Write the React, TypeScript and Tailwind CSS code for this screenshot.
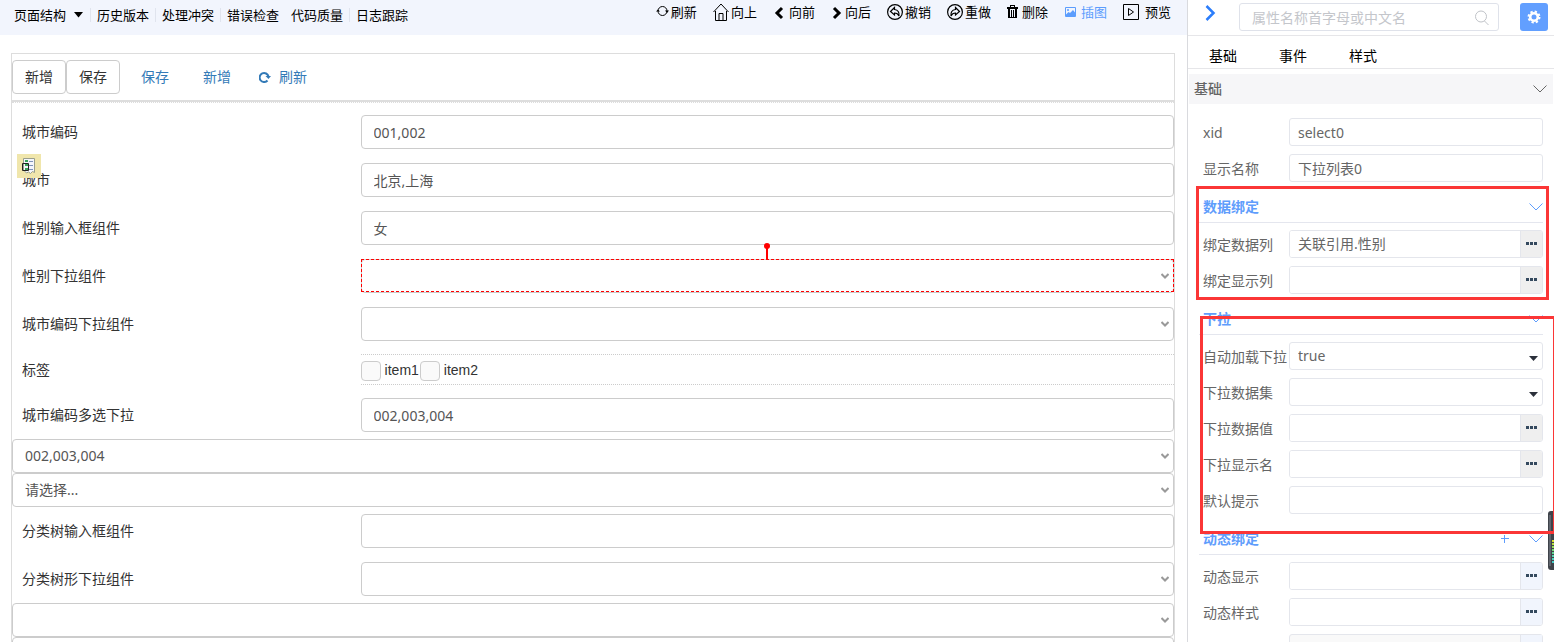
import { ReactNode } from 'react';

type Control = 'text' | 'select' | 'more' | 'dynamic';

interface Property {
  id: string;
  label: string;
  control: Control;
  value?: string;
}

const MENU_ITEMS = [
  { label: '历史版本', divided: true },
  { label: '处理冲突', divided: true },
  { label: '错误检查', divided: true },
  { label: '代码质量', divided: false },
  { label: '日志跟踪', divided: true }
];

const BASIC_PROPS: Property[] = [
  { id: 'xid', label: 'xid', control: 'text', value: 'select0' },
  { id: 'display-name', label: '显示名称', control: 'text', value: '下拉列表0' }
];

const BINDING_PROPS: Property[] = [
  { id: 'bind-ref', label: '绑定数据列', control: 'more', value: '关联引用.性别' },
  { id: 'bind-label', label: '绑定显示列', control: 'more' }
];

const DROPDOWN_PROPS: Property[] = [
  { id: 'auto-load', label: '自动加载下拉', control: 'select', value: 'true' },
  { id: 'option-data', label: '下拉数据集', control: 'select' },
  { id: 'option-value', label: '下拉数据值', control: 'more' },
  { id: 'option-label', label: '下拉显示名', control: 'more' },
  { id: 'option-hint', label: '默认提示', control: 'text' }
];

const DYNAMIC_PROPS: Property[] = [
  { id: 'dynamic-visible', label: '动态显示', control: 'dynamic' },
  { id: 'dynamic-style', label: '动态样式', control: 'dynamic' }
];

const RefreshIcon = () => (
  <svg className="h-4 w-[15px]" viewBox="0 0 15 16" fill="none" stroke="currentColor">
    <circle cx="6.500" cy="7" r="4.500" />
    <path d="M0 7.500h4L2 5.500zM9 6.500h4l-2 2.500z" fill="currentColor" stroke="none" />
  </svg>
);

const HomeIcon = () => (
  <svg className="h-5 w-[18px]" viewBox="0 0 18 20" fill="none" stroke="currentColor">
    <path d="M.5 10 8 2l7.500 8M2.500 9v9.500h11V9M6 18.500v-7h4v7" />
  </svg>
);

const BackIcon = () => (
  <svg className="h-4 w-4" viewBox="0 0 16 16" fill="none" stroke="currentColor" strokeWidth="3">
    <path d="M9 4 4 9l5 5" />
  </svg>
);

const ForwardIcon = () => (
  <svg className="h-4 w-3.5" viewBox="0 0 14 16" fill="none" stroke="currentColor" strokeWidth="3">
    <path d="m3 4 5 5-5 5" />
  </svg>
);

const UndoIcon = () => (
  <svg className="h-[18px] w-[18px]" viewBox="0 0 18 18" fill="none" stroke="currentColor" strokeWidth="1.200">
    <circle cx="8" cy="9" r="7.400" />
    <path d="M7.500 4.500 3.500 8.500l4 3.500v-2c2.500 0 3.500.5 4.500 3 .5-4-1-6-4.500-6.500z" />
  </svg>
);

const RedoIcon = () => (
  <svg className="h-[18px] w-[18px]" viewBox="0 0 18 18" fill="none" stroke="currentColor" strokeWidth="1.200">
    <circle cx="8" cy="9" r="7.400" />
    <path d="m8.500 4.500 4 4-4 3.500v-2c-2.500 0-3.500.5-4.500 3-.5-4 1-6 4.500-6.500z" />
  </svg>
);

const TrashIcon = () => (
  <svg className="h-4 w-[15px]" viewBox="0 0 15 16" fill="currentColor" shapeRendering="crispEdges">
    <path d="M0 3h11v2H0zM3 1h5v1H3zM3 1h1v2H3zM7 1h1v2H7z" />
    <path d="M1 5h2v9H1zM4 6h1v7H4zM6 6h1v7H6zM8 5h2v9H8zM2 13h7v1H2z" />
  </svg>
);

const ImageIcon = () => (
  <svg className="h-4 w-[17px]" viewBox="0 0 17 16">
    <path d="M1.500 3.500h10v9h-10z" fill="none" stroke="currentColor" />
    <path d="M2 10.500 4.500 8 6 9l3-3 2 2.500V12H2z" fill="currentColor" />
    <circle cx="4" cy="6" r="1" fill="currentColor" />
  </svg>
);

const PreviewIcon = () => (
  <svg className="h-[18px] w-[22px]" viewBox="0 0 22 18" fill="none" stroke="currentColor">
    <path d="M.5 1.500h15v15H.5zM5.500 5.500v7l5-3.500z" />
  </svg>
);

const ThinChevron = () => (
  <svg className="h-2 w-3.5" viewBox="0 0 14 8" fill="none" stroke="currentColor">
    <path d="m.5.5 6.500 6.500 6.500-6.500" />
  </svg>
);

const TOOLS: { label: string; icon: ReactNode }[] = [
  { label: '刷新', icon: <RefreshIcon /> },
  { label: '向上', icon: <HomeIcon /> },
  { label: '向前', icon: <BackIcon /> },
  { label: '向后', icon: <ForwardIcon /> },
  { label: '撤销', icon: <UndoIcon /> },
  { label: '重做', icon: <RedoIcon /> },
  { label: '删除', icon: <TrashIcon /> },
  { label: '插图', icon: <ImageIcon /> },
  { label: '预览', icon: <PreviewIcon /> }
];

const TopBar = () => (
  <header className="flex h-[35px] items-start justify-between bg-[#f2f5fd] pr-4 pl-2 text-[13px] leading-5 whitespace-nowrap text-black">
    <nav className="flex items-center pt-[5px]">
      <button className="flex items-center gap-2 px-1.5">
        页面结构
        <svg className="h-1.5 w-2.5" viewBox="0 0 10 6">
          <path d="M0 0h9L4.500 5.500z" />
        </svg>
      </button>
      {MENU_ITEMS.map(({ label, divided }) => (
        <div key={label} className="flex items-center">
          {divided && <span className="h-3.5 w-px bg-[#e0e4ee]" />}
          <button className="px-1.5">{label}</button>
        </div>
      ))}
    </nav>
    <div className="flex gap-4 pt-0.5">
      {TOOLS.map(({ label, icon }) => (
        <button
          key={label}
          className={
            label === '插图'
              ? 'flex h-5 items-center text-[#5c9dfd]'
              : 'flex h-5 items-center'
          }
        >
          {icon}
          {label}
        </button>
      ))}
    </div>
  </header>
);

const TextField = ({ id, value }: { id: string; value?: string }) => (
  <input
    id={id}
    type="text"
    defaultValue={value}
    className="block h-[34px] w-full rounded border border-[#ccc] bg-white px-3 text-[#555]"
  />
);

const SelectField = ({
  id,
  value,
  label
}: {
  id: string;
  value?: string;
  label?: string;
}) => (
  <div className="relative">
    <select
      id={id}
      aria-label={label}
      className="block h-[34px] w-full appearance-none rounded border border-[#ccc] bg-white px-3 text-[#555]"
    >
      <option>{value}</option>
    </select>
    <svg
      className="pointer-events-none absolute top-3.5 right-[5px] h-2 w-2"
      viewBox="0 0 8 8"
      fill="none"
      stroke="#999"
      strokeWidth="2"
    >
      <path d="m.5 1 3.500 3.500L7.500 1" />
    </svg>
  </div>
);

const FormRow = ({
  id,
  label,
  children
}: {
  id: string;
  label: string;
  children: ReactNode;
}) => (
  <div className="flex items-center py-[7px]">
    <label htmlFor={id} className="w-[30%] pl-2.5">
      {label}
    </label>
    <div className="w-[70%]">{children}</div>
  </div>
);

/** Yellow marker for the non-visual data component dropped on the page. */
const DataMarker = () => (
  <div className="absolute -top-0.5 left-[5px] bg-[#f0e6ac]">
    <svg className="h-6 w-6" viewBox="0 0 24 24" fill="none">
      <path d="M6.500 4.500h11v14l-2-1-2 2-2-1.500-2 1-3-3z" fill="#f4f6fb" stroke="#9a9f8c" />
      <path d="M12 7.500h4M12 11.500h4M12 15.500h4" stroke="#7f93b8" />
      <path d="M8 6h3v2H8zM8 10h3v2H8zM8 14h3v2H8z" fill="#3aa35a" />
      <path d="M5.500 9.500h6v7h-6z" stroke="#222" />
    </svg>
  </div>
);

const SelectionFrame = () => (
  <div className="pointer-events-none absolute inset-x-0 top-0 bottom-px border border-dashed border-[#f00]">
    <svg className="absolute -top-[17px] left-1/2 h-4 w-1.5 -translate-x-1/2" viewBox="0 0 6 16">
      <circle cx="3" cy="3" r="3" fill="#f00" />
      <path d="M2 4h2v12H2z" fill="#f00" />
    </svg>
  </div>
);

const Canvas = () => (
  <main className="mt-[18px] mr-3 ml-[11px] border border-[#ddd] text-sm text-[#333]">
    <div className="flex border-b-2 border-[#ddd] py-1.5 leading-5">
      <button className="rounded border border-[#ccc] px-3 py-1.5">新增</button>
      <button className="rounded border border-[#ccc] px-3 py-1.5">保存</button>
      <button className="ml-2 px-[13px] py-[7px] text-[#337ab7]">保存</button>
      <button className="ml-2 px-[13px] py-[7px] text-[#337ab7]">新增</button>
      <button className="ml-0.5 flex items-center gap-2 px-[13px] py-[7px] text-[#337ab7]">
        <svg className="h-3 w-3" viewBox="0 0 12 12" fill="none" stroke="currentColor" strokeWidth="2">
          <path d="M8.500 9.500A4.500 4.500 0 1 1 9.500 5.500" />
          <path d="M6.500 5h5.500L9.500 8z" fill="currentColor" stroke="none" />
        </svg>
        刷新
      </button>
    </div>
    <form className="border-t border-dotted border-[#ddd] pt-[5px]">
      <FormRow id="city-code" label="城市编码">
        <TextField id="city-code" value="001,002" />
      </FormRow>
      <div className="relative">
        <FormRow id="city" label="城市">
          <TextField id="city" value="北京,上海" />
        </FormRow>
        <DataMarker />
      </div>
      <FormRow id="gender" label="性别输入框组件">
        <TextField id="gender" value="女" />
      </FormRow>
      <FormRow id="gender-select" label="性别下拉组件">
        <div className="relative">
          <SelectField id="gender-select" />
          <SelectionFrame />
        </div>
      </FormRow>
      <FormRow id="city-select" label="城市编码下拉组件">
        <SelectField id="city-select" />
      </FormRow>
      <div className="flex items-center py-1.5">
        <span className="w-[30%] pl-2.5">标签</span>
        <div className="flex h-[31px] w-[70%] items-center gap-px border-y border-dotted border-[#ccc] font-['Liberation_Sans',sans-serif]">
          {['item1', 'item2'].map((item) => (
            <label key={item} className="flex items-center gap-1">
              <input
                type="checkbox"
                className="mt-0.5 h-5 w-5 appearance-none rounded border border-[#ccc] bg-[#fafafa]"
              />
              {item}
            </label>
          ))}
        </div>
      </div>
      <FormRow id="city-multi" label="城市编码多选下拉">
        <TextField id="city-multi" value="002,003,004" />
      </FormRow>
      <SelectField id="multi-select" label="多选下拉" value="002,003,004" />
      <SelectField id="single-select" label="单选下拉" value="请选择..." />
      <FormRow id="tree-input" label="分类树输入框组件">
        <TextField id="tree-input" />
      </FormRow>
      <FormRow id="tree-select" label="分类树形下拉组件">
        <SelectField id="tree-select" />
      </FormRow>
      <SelectField id="extra-select" label="下拉" />
      <SelectField id="extra-select-2" label="下拉" />
    </form>
  </main>
);

const Dots = () => (
  <svg className="h-[3px] w-[11px]" viewBox="0 0 11 3" fill="#34495e">
    <path d="M0 0h3v3H0zM4 0h3v3H4zM8 0h3v3H8z" />
  </svg>
);

const PropertyRow = ({ id, label, control, value }: Property) => {
  let field: ReactNode;

  if (control === 'select') {
    field = (
      <div className="relative flex-1">
        <select
          id={id}
          className="block h-7 w-full appearance-none rounded-[3px] border border-[#e4e6ec] bg-white px-2"
        >
          <option>{value}</option>
        </select>
        <svg
          className="pointer-events-none absolute top-3.5 right-[5px] h-[5px] w-[9px]"
          viewBox="0 0 9 5"
          fill="#2b303b"
        >
          <path d="M0 0h9L4.500 5z" />
        </svg>
      </div>
    );
  } else if (control === 'text') {
    field = (
      <input
        id={id}
        type="text"
        defaultValue={value}
        className="h-7 min-w-0 flex-1 rounded-[3px] border border-[#e4e6ec] bg-white px-2"
      />
    );
  } else {
    field = (
      <div className="flex h-7 min-w-0 flex-1 overflow-hidden rounded-[3px] border border-[#e4e6ec]">
        <input
          id={id}
          type="text"
          defaultValue={value}
          className="min-w-0 flex-1 bg-white px-2"
        />
        <button
          aria-label={`${label} 编辑`}
          className={
            control === 'dynamic'
              ? 'flex w-[22px] items-center justify-center border-l border-[#e4e6ec] bg-[#f1f5fd] pb-px'
              : 'flex w-[22px] items-center justify-center border-l border-[#e4e6ec] bg-[#efefef] pb-px'
          }
        >
          <Dots />
        </button>
      </div>
    );
  }

  return (
    <div className="flex items-center pl-[15px]">
      <label htmlFor={id} className="w-[86px] shrink-0 pt-0.5 whitespace-nowrap">
        {label}
      </label>
      {field}
    </div>
  );
};

const PropertyGroup = ({
  title,
  items,
  addable,
  children
}: {
  title: string;
  items: Property[];
  addable?: boolean;
  children?: ReactNode;
}) => (
  <section className="relative pr-[11px]">
    <h3 className="ml-[11px] flex h-[41px] items-center border-b border-[#e4e6ee] pt-2.5 pl-1 font-bold text-[#5f9dfc]">
      <span className="flex-1">{title}</span>
      {addable && (
        <button aria-label="添加" className="mr-5">
          <svg className="h-2 w-2" viewBox="0 0 8 8" stroke="currentColor">
            <path d="M0 3.500h8M3.500 0v8" />
          </svg>
        </button>
      )}
      <button aria-label="折叠">
        <ThinChevron />
      </button>
    </h3>
    <div className="flex flex-col gap-2 pt-[7px]">
      {items.map((item) => (
        <PropertyRow key={item.id} {...item} />
      ))}
    </div>
    {children}
  </section>
);

const METER_COLORS = ['#d8e02f', '#b5e03c', '#94dd55', '#76da74', '#5fd593', '#50d3ac', '#48d0bd', '#43cec8'];

const LevelMeter = () => (
  <svg className="absolute top-[511px] right-0 h-[59px] w-1.5" viewBox="0 0 6 59">
    <path d="M6 0H3Q0 0 0 3v53q0 3 3 3h3z" fill="#3f434a" />
    <path d="M1 4h2v51H1z" fill="#5f646d" />
    {METER_COLORS.map((color, i) => (
      <rect key={color} x="4" y={29 + i * 3} width="2" height="2" fill={color} />
    ))}
  </svg>
);

const PropertyPanel = () => (
  <aside className="relative w-[367px] shrink-0 overflow-hidden border-l border-[#d9dade] bg-white text-sm text-[#666]">
    <div className="flex h-9 items-start border-b border-[#e6e6e9] pt-[3px] pr-1.5 pl-[17px]">
      <button aria-label="收起面板" className="text-[#2b7dfb]">
        <svg className="h-5 w-3" viewBox="0 0 12 20" fill="none" stroke="currentColor" strokeWidth="2.500">
          <path d="m1.500 3 7 7-7 7" />
        </svg>
      </button>
      <div className="relative mr-[21px] ml-[22px] flex-1">
        <input
          type="search"
          aria-label="搜索属性"
          placeholder="属性名称首字母或中文名"
          className="block h-7 w-full rounded-[3px] border border-[#dfe2ea] px-3 placeholder:text-[#c4c6cb]"
        />
        <svg
          className="pointer-events-none absolute top-[7px] right-2.5 h-4 w-3.5"
          viewBox="0 0 14 16"
          fill="none"
          stroke="#c0c3c8"
        >
          <circle cx="6" cy="6.500" r="5.500" />
          <path d="m9.500 11 4 4" />
        </svg>
      </div>
      <button
        aria-label="设置"
        className="flex h-7 w-7 items-center justify-center rounded-[3px] bg-[#629fff] text-white"
      >
        <svg className="h-3.5 w-3.5" viewBox="0 0 14 14" fill="none" stroke="currentColor">
          <circle cx="7" cy="7" r="3.800" strokeWidth="2.600" />
          <circle cx="7" cy="7" r="5.500" strokeWidth="2" strokeDasharray="2.300 2.019" />
        </svg>
      </button>
    </div>
    <div className="flex h-[33px] items-end gap-[42px] border-b border-[#e6e6e9] pb-0.5 pl-[21px] text-black">
      <button>基础</button>
      <button>事件</button>
      <button>样式</button>
    </div>
    <h2 className="mx-px mt-[5px] flex h-[30px] items-center justify-between bg-[#f6f6f8] pr-1.5 pl-[5px] font-medium">
      基础
      <button aria-label="折叠">
        <ThinChevron />
      </button>
    </h2>
    <div className="flex flex-col gap-2 pt-3.5 pr-[11px]">
      {BASIC_PROPS.map((item) => (
        <PropertyRow key={item.id} {...item} />
      ))}
    </div>
    <LevelMeter />
    <PropertyGroup title="数据绑定" items={BINDING_PROPS}>
      <div className="pointer-events-none absolute top-1 right-[5px] -bottom-1.5 left-2 z-10 border-3 border-[#fb3636]" />
    </PropertyGroup>
    <PropertyGroup title="下拉" items={DROPDOWN_PROPS}>
      <div className="pointer-events-none absolute top-[22px] -right-0.5 -bottom-5 left-3 z-10 border-3 border-[#fb3636]" />
    </PropertyGroup>
    <PropertyGroup title="动态绑定" items={DYNAMIC_PROPS} addable />
    <div className="mt-2 mr-[11px] ml-[101px] flex h-7 rounded-[3px] border border-[#e4e6ec] bg-[#f9f9f9]">
      <div className="ml-auto w-[22px] border-l border-[#e4e6ec] bg-[#f1f5fd]" />
    </div>
  </aside>
);

export default function App() {
  return (
    <div className="flex h-screen overflow-hidden bg-white font-['Noto_Sans','Noto_Sans_CJK_SC',sans-serif]">
      <div className="min-w-0 flex-1">
        <TopBar />
        <Canvas />
      </div>
      <PropertyPanel />
    </div>
  );
}
